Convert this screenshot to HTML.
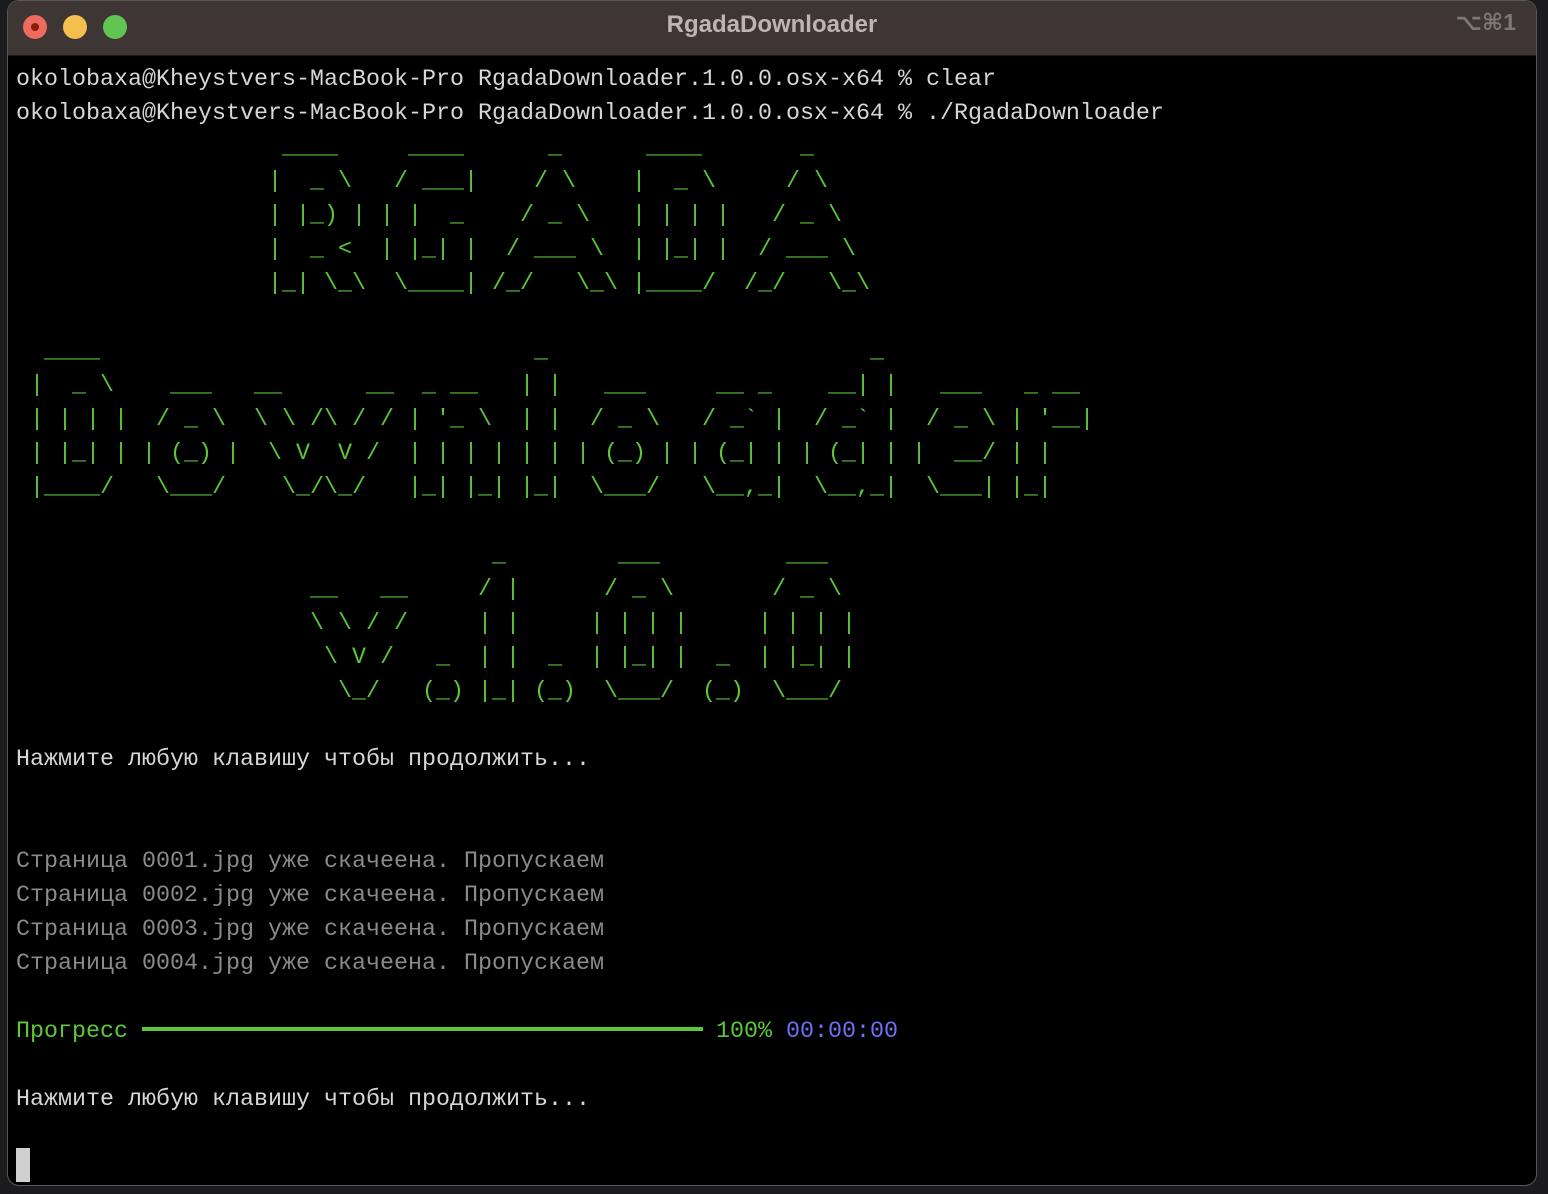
<!DOCTYPE html>
<html><head><meta charset="utf-8">
<style>
html,body{margin:0;padding:0;}
body{width:1548px;height:1194px;background:#1c1c1e;position:relative;overflow:hidden;font-family:"Liberation Mono",monospace;}
.win{position:absolute;left:7px;top:0;width:1530px;height:1186px;background:#000;border-radius:12px;border:1px solid #5a5656;box-sizing:border-box;overflow:hidden;}
.title{position:absolute;left:0;top:0;width:100%;height:54px;background:#3e3634;border-bottom:1px solid #1a1a1a;}
.tl{position:absolute;top:14px;width:24px;height:24px;border-radius:50%;}
.ttext{position:absolute;left:0;width:100%;top:10px;text-align:center;font-family:"Liberation Sans",sans-serif;font-weight:bold;font-size:24px;color:#bcb5b2;}
.kbd{position:absolute;right:20px;top:8px;font-family:"Liberation Sans","DejaVu Sans",sans-serif;font-weight:bold;font-size:23px;color:#7d7775;}
pre{margin:0;position:absolute;font-family:"Liberation Mono",monospace;font-size:23.333px;line-height:34px;white-space:pre;}
.w{color:#d6d6d6;}
.g{color:#5cc73b;}
.gr{color:#8a8a8a;}
.b{color:#6f6ff2;}
</style></head><body>
<div class="win">
  <div class="title">
    <div class="tl" style="left:15px;background:#ec6a5e;"><div style="position:absolute;left:8px;top:8px;width:8px;height:8px;border-radius:50%;background:#8c1a10;"></div></div>
    <div class="tl" style="left:55px;background:#f4bf4f;"></div>
    <div class="tl" style="left:95px;background:#61c554;"></div>
    <div class="ttext">RgadaDownloader</div>
    <div class="kbd">⌥⌘1</div>
  </div>
</div>

<pre class="w" style="left:16px;top:63px;">
okolobaxa@Kheystvers-MacBook-Pro RgadaDownloader.1.0.0.osx-x64 % clear
okolobaxa@Kheystvers-MacBook-Pro RgadaDownloader.1.0.0.osx-x64 % ./RgadaDownloader</pre>

<!-- RGADA -->
<pre class="g" style="left:268px;top:131px;">
 ____
|  _ \
| |_) |
|  _ &lt;
|_| \_\</pre>
<pre class="g" style="left:380px;top:131px;">
  ____
 / ___|
| |  _
| |_| |
 \____|</pre>
<pre class="g" style="left:492px;top:131px;">
    _
   / \
  / _ \
 / ___ \
/_/   \_\</pre>
<pre class="g" style="left:632px;top:131px;">
 ____
|  _ \
| | | |
| |_| |
|____/</pre>
<pre class="g" style="left:744px;top:131px;">
    _
   / \
  / _ \
 / ___ \
/_/   \_\</pre>

<!-- Download -->
<pre class="g" style="left:30px;top:335px;">
 ____
|  _ \
| | | |
| |_| |
|____/</pre>
<pre class="g" style="left:142px;top:335px;">

  ___
 / _ \
| (_) |
 \___/</pre>
<pre class="g" style="left:254px;top:335px;">

__      __
\ \ /\ / /
 \ V  V /
  \_/\_/</pre>
<pre class="g" style="left:408px;top:335px;">

 _ __
| '_ \
| | | |
|_| |_|</pre>
<pre class="g" style="left:520px;top:335px;">
 _
| |
| |
| |
|_|</pre>
<pre class="g" style="left:576px;top:335px;">

  ___
 / _ \
| (_) |
 \___/</pre>
<pre class="g" style="left:688px;top:335px;">

  __ _
 / _` |
| (_| |
 \__,_|</pre>
<pre class="g" style="left:800px;top:335px;">
     _
  __| |
 / _` |
| (_| |
 \__,_|</pre>
<pre class="g" style="left:912px;top:335px;">

  ___
 / _ \
|  __/
 \___|</pre>
<pre class="g" style="left:1010px;top:335px;">

 _ __
| '__|
| |
|_|</pre>

<!-- v1.0.0 -->
<pre class="g" style="left:310px;top:539px;">

__   __
\ \ / /
 \ V /
  \_/</pre>
<pre class="g" style="left:422px;top:539px;">



 _
(_)</pre>
<pre class="g" style="left:478px;top:539px;">
 _
/ |
| |
| |
|_|</pre>
<pre class="g" style="left:534px;top:539px;">



 _
(_)</pre>
<pre class="g" style="left:590px;top:539px;">
  ___
 / _ \
| | | |
| |_| |
 \___/</pre>
<pre class="g" style="left:702px;top:539px;">



 _
(_)</pre>
<pre class="g" style="left:758px;top:539px;">
  ___
 / _ \
| | | |
| |_| |
 \___/</pre>

<pre class="w" style="left:16px;top:743px;">
Нажмите любую клавишу чтобы продолжить...</pre>

<pre class="gr" style="left:16px;top:845px;">
Страница 0001.jpg уже скачеена. Пропускаем
Страница 0002.jpg уже скачеена. Пропускаем
Страница 0003.jpg уже скачеена. Пропускаем
Страница 0004.jpg уже скачеена. Пропускаем</pre>

<pre class="g" style="left:16px;top:1015px;">
Прогресс</pre>
<div style="position:absolute;left:142px;top:1027px;width:561px;height:4px;background:#5cc73b;"></div>
<pre class="g" style="left:716px;top:1015px;">
100%</pre>
<pre class="b" style="left:786px;top:1015px;">
00:00:00</pre>

<pre class="w" style="left:16px;top:1083px;">
Нажмите любую клавишу чтобы продолжить...</pre>

<div style="position:absolute;left:16px;top:1148px;width:14px;height:34px;background:#d0d0d0;"></div>
</body></html>
